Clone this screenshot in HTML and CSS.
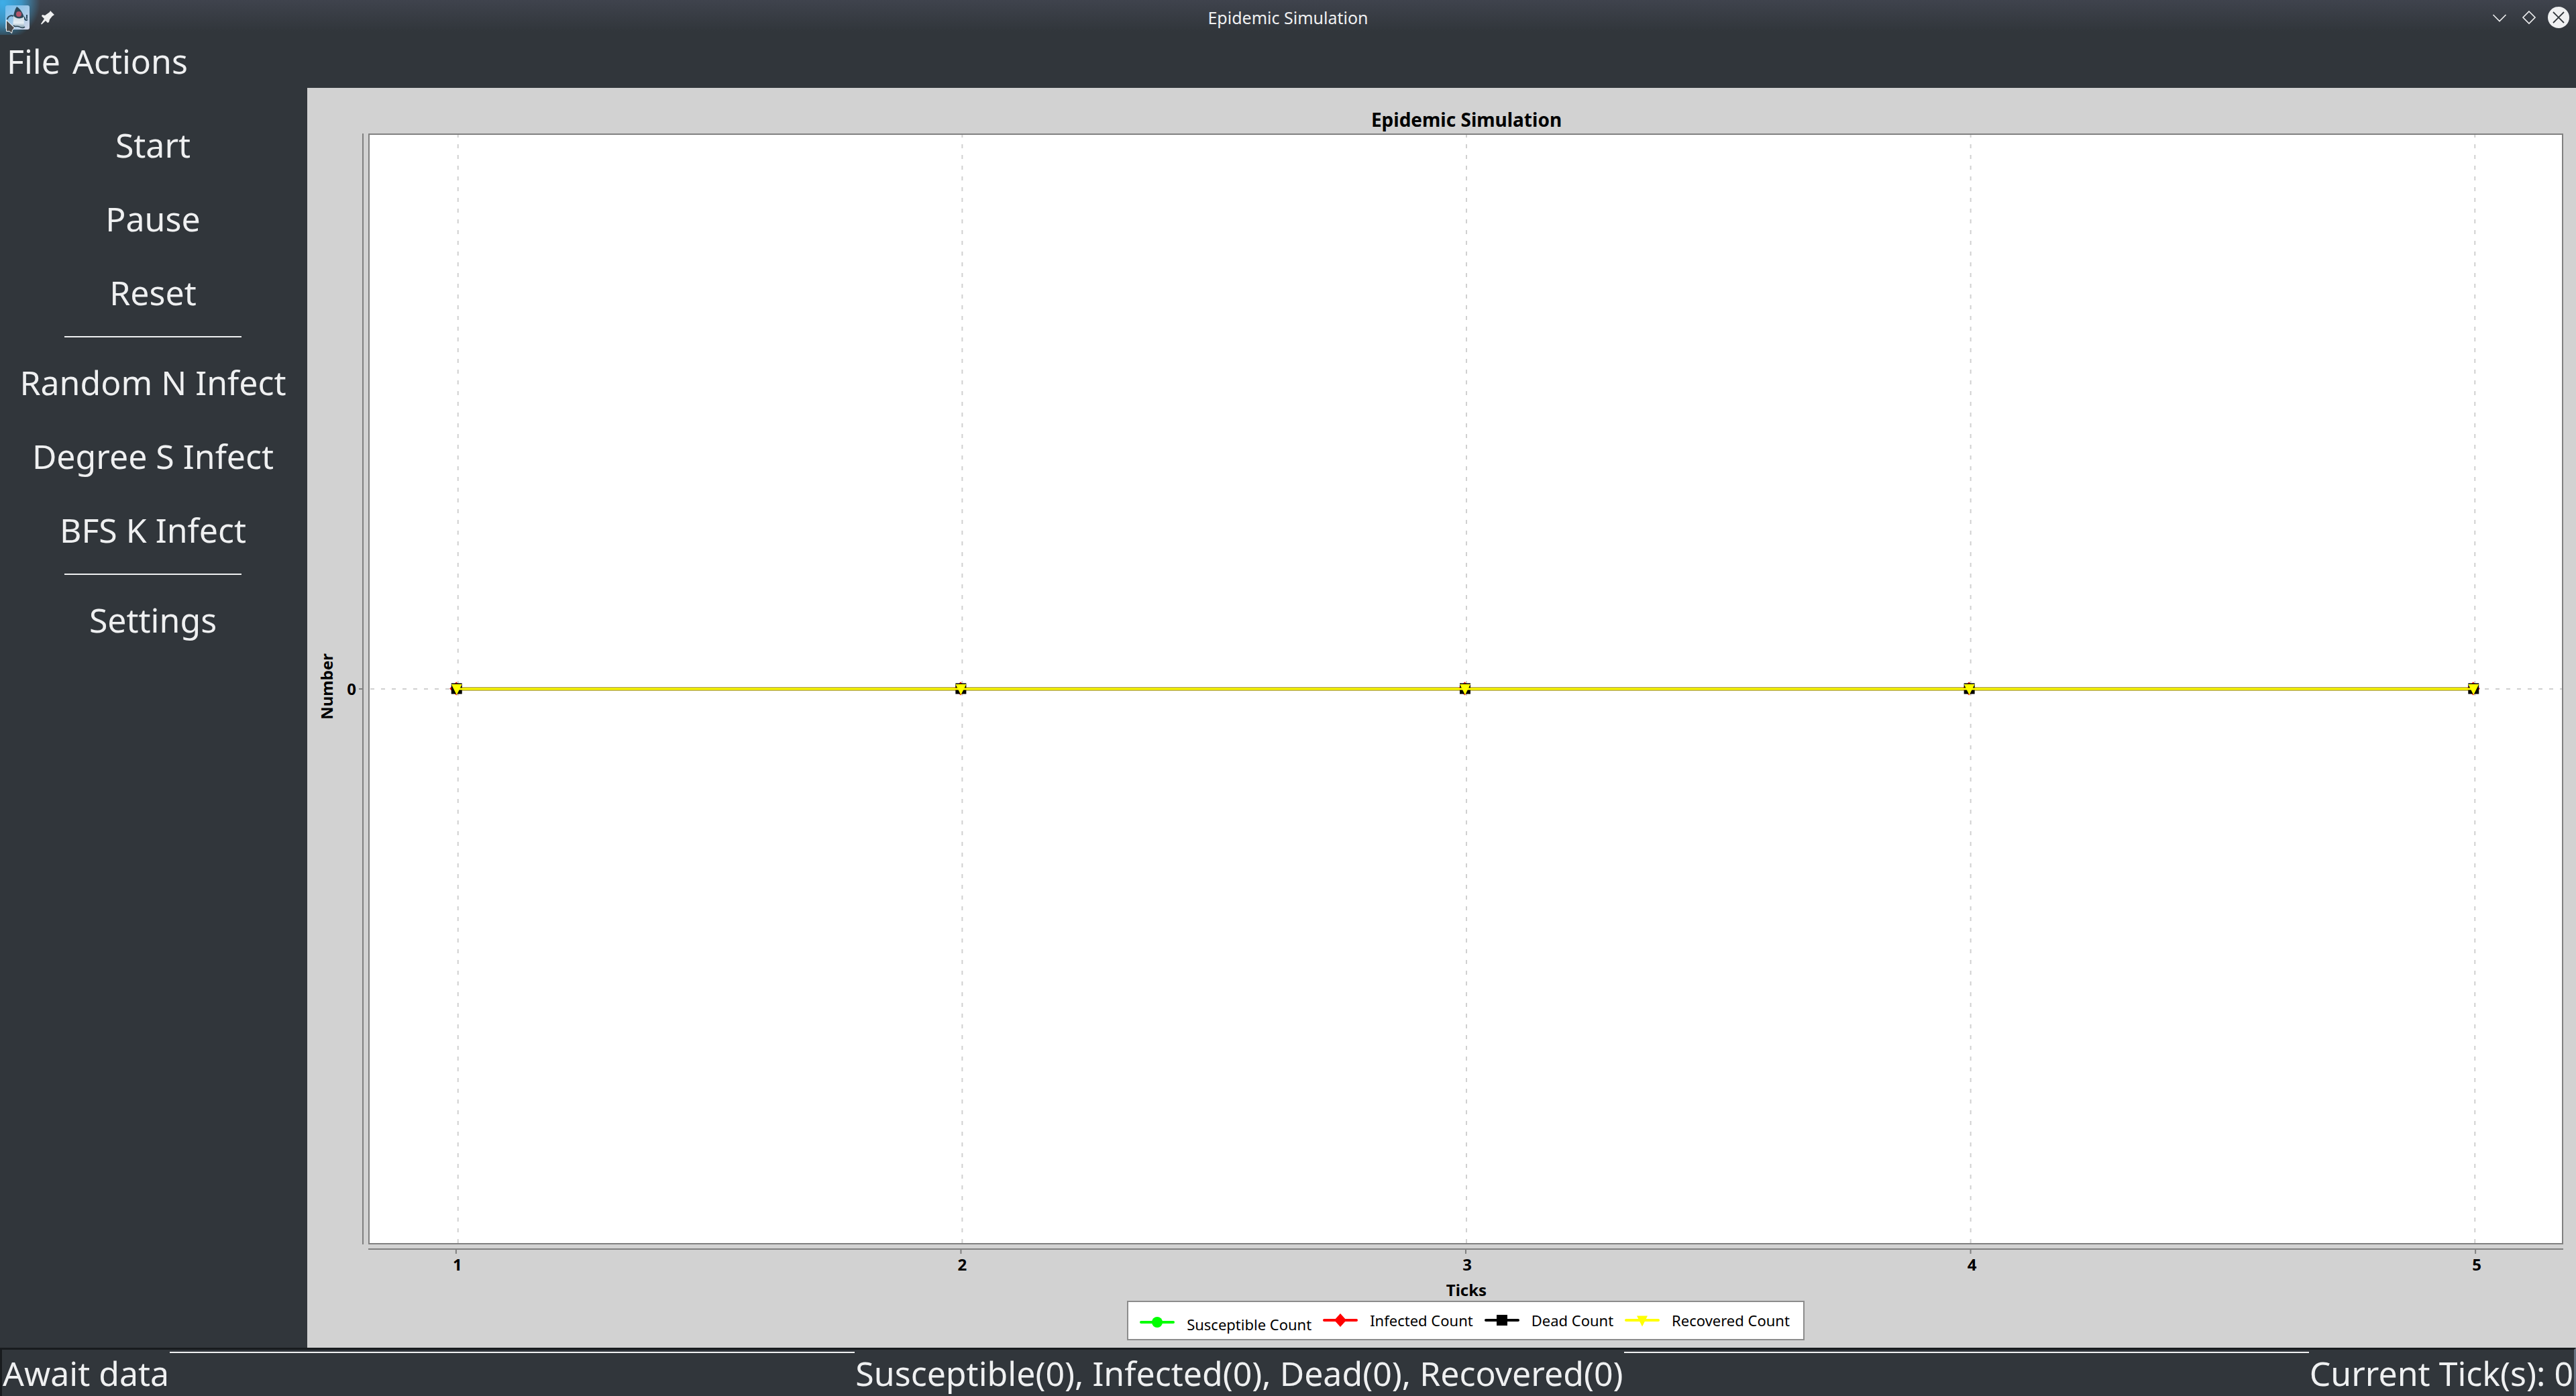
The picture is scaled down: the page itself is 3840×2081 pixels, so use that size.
FILE: index.html
```
<!DOCTYPE html>
<html lang="en">
<head>
<meta charset="utf-8">
<title>Epidemic Simulation</title>
<link rel="stylesheet" href="styles.css">
</head>
<body>
<div class="window">
  <header class="titlebar">
    <div class="titlebar-left">
      <svg class="app-icon" width="56" height="52" viewBox="0 0 56 52" aria-hidden="true">
        <defs>
          <linearGradient id="sky" x1="0" y1="0" x2="1" y2="1">
            <stop offset="0" stop-color="#6fbdf0"/>
            <stop offset=".45" stop-color="#9cc8e8"/>
            <stop offset="1" stop-color="#d6d9e8"/>
          </linearGradient>
          <linearGradient id="belly" x1="0" y1="0" x2="0" y2="1">
            <stop offset="0" stop-color="#c4d6df"/>
            <stop offset=".6" stop-color="#e6eff4"/>
            <stop offset="1" stop-color="#7796a8"/>
          </linearGradient>
        </defs>
        <rect x="8" y="8" width="36" height="36" rx="3" fill="url(#sky)"/>
        <path d="M20 24c-4-2-9 1-9 5M36 25c1 5 3 6 5 4M40 22v6" fill="none" stroke="#2b4a5e" stroke-width="2"/>
        <path d="M20 24c1-5 2-10 5-14 5 3 9 9 11 16l-4 3H22z" fill="#2c4757"/>
        <path d="M20 23c3 5 11 6 16 2 0 6-1 10 1 16-5 2-8-1-11-1-3 0-5 0-7-2 1-5 1-9 1-15z" fill="url(#belly)"/>
        <path d="M20 38c2 3 6 0 9 2s6 2 8 0" fill="none" stroke="#2f4552" stroke-width="1.500"/>
        <circle cx="28" cy="21" r="4" fill="#b3566b"/>
        <path d="M9.500 30v16.500h4.500l3.500 3 1-4.500 3-3.500z" fill="#4b4b4b" stroke="#fff" stroke-width="1"/>
      </svg>
      <button class="icon-button" aria-label="Keep on all desktops">
        <svg width="22" height="22" viewBox="0 0 22 22"><path d="M15 1l6 6-3 2-4 5-1 4-2 1-3-3-6 5.500-1-1L6 13l-4-4 1-2 4 1 7-5z" fill="#eff0f1"/></svg>
      </button>
    </div>
    <span class="window-title">Epidemic Simulation</span>
    <div class="titlebar-right">
      <button class="icon-button" aria-label="Minimize">
        <svg width="32" height="32" viewBox="0 0 32 32"><path d="M6.500 12l9.500 9.500 9.500-9.500" fill="none" stroke="#eff0f1" stroke-width="1.600"/></svg>
      </button>
      <button class="icon-button" aria-label="Maximize">
        <svg width="32" height="32" viewBox="0 0 32 32"><path d="M16 7l9 9-9 9-9-9z" fill="none" stroke="#eff0f1" stroke-width="1.600"/></svg>
      </button>
      <button class="icon-button" aria-label="Close">
        <svg width="32" height="32" viewBox="0 0 32 32"><circle cx="16" cy="16" r="16" fill="#eff0f1"/><path d="M8 8l16 16M24 8L8 24" stroke="#31363b" stroke-width="1.800"/></svg>
      </button>
    </div>
  </header>

  <nav class="menubar">
    <button class="menu">File</button>
    <button class="menu">Actions</button>
  </nav>

  <div class="workspace">
    <aside class="sidebar">
      <button class="action">Start</button>
      <button class="action">Pause</button>
      <button class="action">Reset</button>
      <hr class="divider">
      <button class="action">Random N Infect</button>
      <button class="action">Degree S Infect</button>
      <button class="action">BFS K Infect</button>
      <hr class="divider">
      <button class="action">Settings</button>
    </aside>

    <main class="chart">
      <h1 class="chart-title">Epidemic Simulation</h1>
      <div class="y-label"><span class="y-label-text">Number</span></div>
      <div class="y-tick">0</div>
      <svg class="y-axis">
        <line x1="7" x2="7" y1="0" y2="100%" class="axis"/>
        <line x1="1" x2="7" y1="50%" y2="50%" class="axis"/>
      </svg>
      <div class="plot">
        <svg class="plot-canvas">
          <defs>
            <g id="point">
              <path d="M-2.500-10.500l10 10-10 10-10-10z" fill="#f00"/>
              <rect x="-10" y="-8.500" width="16" height="16" fill="#000"/>
              <path d="M-10-7H6L-2 9z" fill="#ff0"/>
            </g>
          </defs>
          <g transform="translate(1 0)">
            <line class="grid grid-x" x1="4%" x2="4%" y1="0" y2="100%"/>
            <line class="grid grid-x" x1="27%" x2="27%" y1="0" y2="100%"/>
            <line class="grid grid-x" x1="50%" x2="50%" y1="0" y2="100%"/>
            <line class="grid grid-x" x1="73%" x2="73%" y1="0" y2="100%"/>
            <line class="grid grid-x" x1="96%" x2="96%" y1="0" y2="100%"/>
            <line class="grid" x1="0" x2="100%" y1="50%" y2="50%"/>
            <line class="series-edge" x1="4%" x2="96%" y1="50%" y2="50%"/>
            <use href="#point" x="4%" y="50%"/>
            <use href="#point" x="27%" y="50%"/>
            <use href="#point" x="50%" y="50%"/>
            <use href="#point" x="73%" y="50%"/>
            <use href="#point" x="96%" y="50%"/>
            <line class="series" x1="4%" x2="96%" y1="50%" y2="50%"/>
          </g>
        </svg>
      </div>
      <svg class="x-axis">
        <line x1="0" x2="100%" y1="7" y2="7" class="axis"/>
        <line x1="4%" x2="4%" y1="7" y2="14" class="axis"/>
        <line x1="27%" x2="27%" y1="7" y2="14" class="axis"/>
        <line x1="50%" x2="50%" y1="7" y2="14" class="axis"/>
        <line x1="73%" x2="73%" y1="7" y2="14" class="axis"/>
        <line x1="96%" x2="96%" y1="7" y2="14" class="axis"/>
        <g transform="translate(2 0)">
          <text x="4%" y="39">1</text>
          <text x="27%" y="39">2</text>
          <text x="50%" y="39">3</text>
          <text x="73%" y="39">4</text>
          <text x="96%" y="39">5</text>
        </g>
      </svg>
      <div class="x-label">Ticks</div>
      <ul class="legend">
        <li class="legend-item legend-first">
          <svg width="52" height="22" viewBox="-26 -11 52 22"><path d="M-24 0H24" stroke="#0f0" stroke-width="4" stroke-linecap="round"/><circle r="8" fill="#0f0"/></svg>
          <span class="legend-text">Susceptible Count</span>
        </li>
        <li class="legend-item">
          <svg width="52" height="22" viewBox="-26 -11 52 22"><path d="M-24 0H24" stroke="#f00" stroke-width="4" stroke-linecap="round"/><path d="M0-10L9 0 0 10-9 0z" fill="#f00"/></svg>
          <span class="legend-text">Infected Count</span>
        </li>
        <li class="legend-item">
          <svg width="52" height="22" viewBox="-26 -11 52 22"><path d="M-24 0H24" stroke="#000" stroke-width="4" stroke-linecap="round"/><rect x="-8" y="-8" width="16" height="16"/></svg>
          <span class="legend-text">Dead Count</span>
        </li>
        <li class="legend-item">
          <svg width="52" height="22" viewBox="-26 -11 52 22"><path d="M-24 0H24" stroke="#ff0" stroke-width="4" stroke-linecap="round"/><path d="M-8-6.500H8L0 9.500z" fill="#ff0"/></svg>
          <span class="legend-text">Recovered Count</span>
        </li>
      </ul>
    </main>
  </div>

  <footer class="statusbar">
    <span class="status">Await data</span>
    <hr class="status-line">
    <span class="status">Susceptible(0), Infected(0), Dead(0), Recovered(0)</span>
    <hr class="status-line">
    <span class="status">Current Tick(s): 0</span>
  </footer>
</div>
</body>
</html>
```
FILE: styles.css
```
* {
  box-sizing: border-box;
}

body {
  margin: 0;
  background: #31363b;
  color: #eff0f1;
  font-family: "Noto Sans", sans-serif;
}

button {
  margin: 0;
  padding: 0;
  border: 0;
  background: none;
  color: inherit;
  font: inherit;
}

svg {
  display: block;
}

.window {
  display: flex;
  flex-direction: column;
  min-height: 100vh;
}

/* Title bar */
.titlebar {
  display: grid;
  grid-template-columns: 1fr auto 1fr;
  align-items: center;
  height: 52px;
  background:
    radial-gradient(circle 56px at 4px 4px, #3daee9 0, rgba(61, 174, 233, 0.75) 50%, rgba(61, 174, 233, 0) 100%),
    linear-gradient(#3f434d, #31363b 90%);
}

.titlebar-left,
.titlebar-right {
  display: flex;
  align-items: center;
}

.titlebar-left {
  gap: 4px;
}

.titlebar-right {
  justify-content: flex-end;
  gap: 12px;
  padding-right: 10px;
}

.window-title {
  font-size: 25px;
  line-height: 52px;
}

/* Menu bar */
.menubar {
  display: flex;
  gap: 18px;
  padding: 0 10px;
  font-size: 50px;
  line-height: 79px;
}

/* Body */
.workspace {
  display: flex;
  flex: 1;
}

.sidebar {
  display: flex;
  flex-direction: column;
  width: 458px;
  padding: 30px 2px 0 0;
  font-size: 50px;
}

.action {
  height: 110px;
}

.divider {
  width: 264px;
  height: 2px;
  margin: 10px 96px 12px;
  border: 0;
  background: #eff0f1;
}

/* Chart */
.chart {
  display: grid;
  flex: 1;
  grid-template-columns: 56px 20px 15px 1fr;
  grid-template-rows: 68px 1fr 48px auto auto;
  padding: 0 19px 11px 0;
  background: #d2d2d2;
  color: #000;
  font-size: 24px;
  font-weight: 700;
  line-height: 28px;
}

.chart-title {
  grid-column: 4;
  margin: 0;
  padding: 26px 0 0 2px;
  font-size: 28px;
  line-height: 42px;
  text-align: center;
}

.y-label,
.y-tick {
  display: flex;
  grid-row: 2;
  align-items: center;
  justify-content: center;
}

.y-label {
  padding: 0 0 8px 2px;
}

.y-label-text {
  transform: rotate(180deg);
  writing-mode: vertical-rl;
}

.y-axis {
  grid-row: 2;
  grid-column: 3;
  width: 15px;
  height: 100%;
}

.plot {
  display: grid;
  grid-row: 2;
  grid-column: 4;
  border: 2px solid #808080;
  background: #fff;
}

.plot-canvas {
  width: 100%;
  height: 100%;
}

.axis {
  stroke: #808080;
  stroke-width: 2;
}

.grid {
  stroke: #d0d0d0;
  stroke-width: 2;
  stroke-dasharray: 6 10;
}

.grid-x {
  stroke-dashoffset: 2;
}

.series-edge {
  stroke: #8c7a00;
  stroke-width: 5;
}

.series {
  stroke: #ff0;
  stroke-width: 3;
}

.x-axis {
  grid-row: 3;
  grid-column: 4;
  width: 100%;
  height: 48px;
  text-anchor: middle;
}

.x-label {
  grid-row: 4;
  grid-column: 4;
  padding: 6px 0 0 2px;
  text-align: center;
}

.legend {
  display: flex;
  grid-row: 5;
  grid-column: 4;
  align-items: flex-start;
  justify-self: center;
  gap: 17px;
  margin: 2px 0 0;
  padding: 13px 20px 8px 17px;
  border: 2px solid #8c8c8c;
  background: #fff;
  font-size: 22px;
  font-weight: 400;
  list-style: none;
}

.legend-item {
  display: flex;
  align-items: center;
  gap: 18px;
}

.legend-first .legend-text {
  padding-top: 6px;
}

/* Status bar */
.statusbar {
  display: flex;
  border-top: 3px solid #181b1e;
  border-right: 3px solid #667180;
  border-left: 3px solid #181b1e;
  font-size: 50px;
  line-height: 67px;
  white-space: nowrap;
}

.status {
  padding: 2px 1px 0;
}

.status-line {
  flex: 1;
  height: 2px;
  margin: 3px 0 0;
  border: 0;
  background: #eff0f1;
}
```
